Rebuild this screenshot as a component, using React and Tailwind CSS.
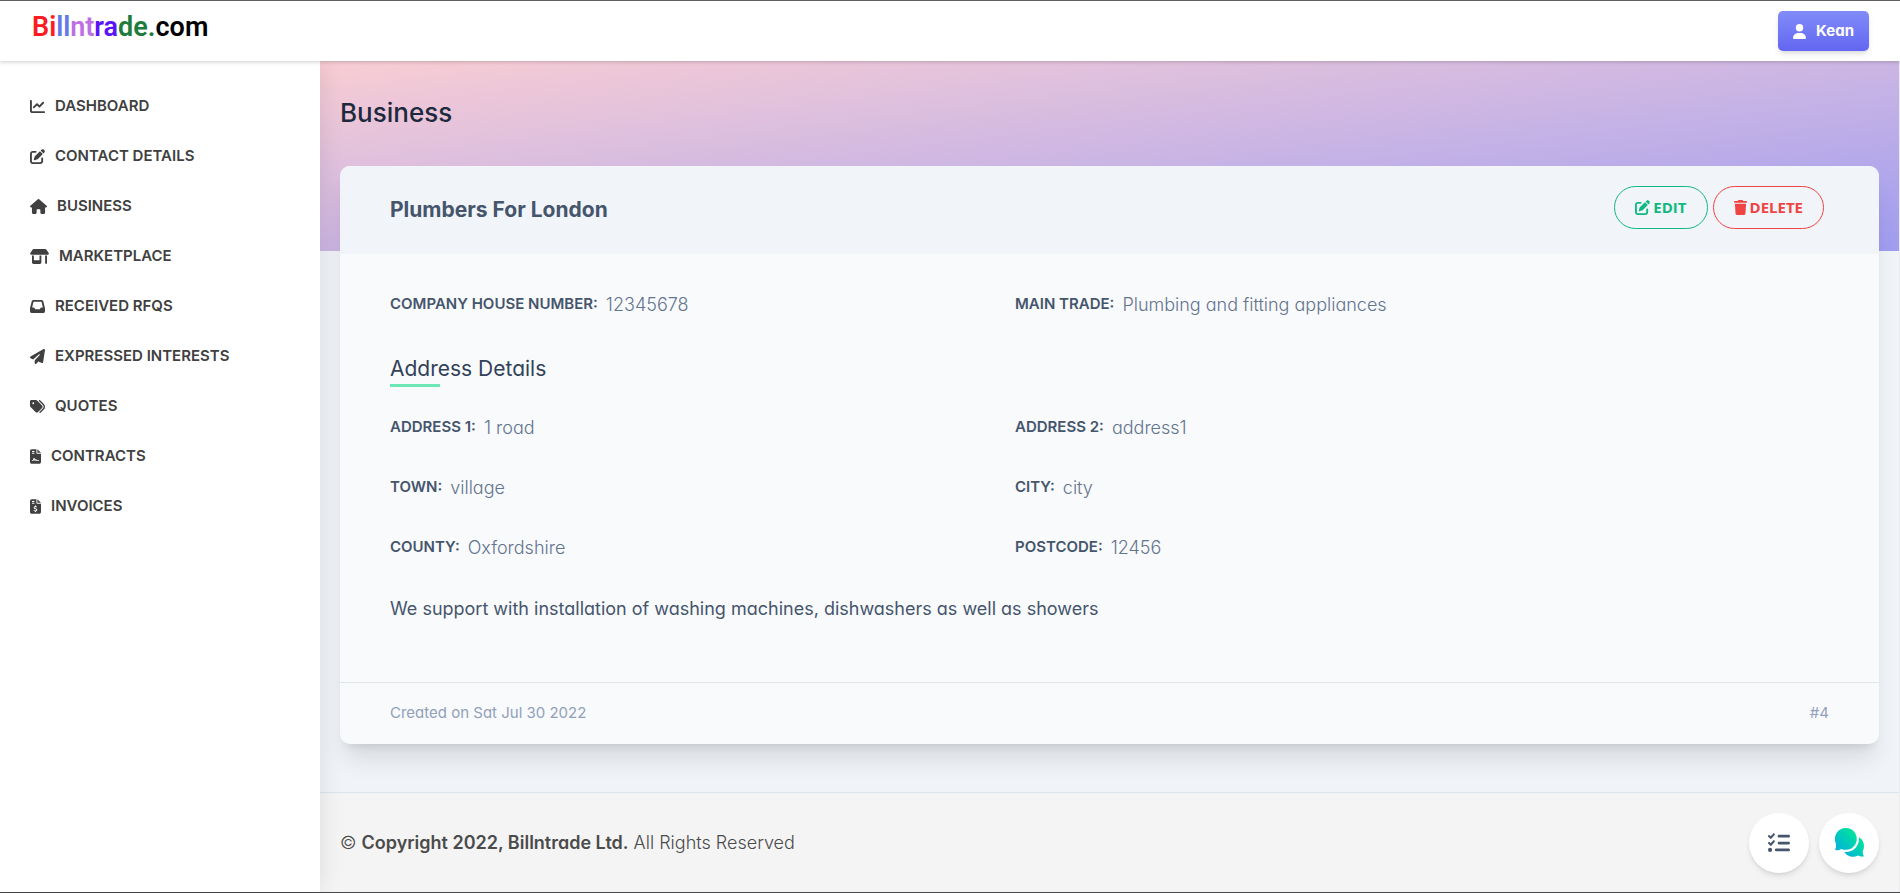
import {
  FaChartLine,
  FaPenToSquare,
  FaHouse,
  FaShop,
  FaInbox,
  FaPaperPlane,
  FaTags,
  FaFileContract,
  FaFileInvoiceDollar,
  FaTrash,
  FaUser,
  FaListCheck,
} from "react-icons/fa6";

const NAV = [
  { label: "Dashboard", Icon: FaChartLine, width: "w-[15px]" },
  { label: "Contact Details", Icon: FaPenToSquare, width: "w-[15px]" },
  { label: "Business", Icon: FaHouse, width: "w-[17px]" },
  { label: "Marketplace", Icon: FaShop, width: "w-[19px]" },
  { label: "Received RFQs", Icon: FaInbox, width: "w-[15px]" },
  { label: "Expressed Interests", Icon: FaPaperPlane, width: "w-[15px]" },
  { label: "Quotes", Icon: FaTags, width: "w-[15px]" },
  { label: "Contracts", Icon: FaFileContract, width: "w-[11px]" },
  { label: "Invoices", Icon: FaFileInvoiceDollar, width: "w-[11px]" },
];

const COMPANY = [
  ["Company House Number", "12345678"],
  ["Main Trade", "Plumbing and fitting appliances"],
];

const ADDRESS = [
  ["Address 1", "1 road"],
  ["Address 2", "address1"],
  ["Town", "village"],
  ["City", "city"],
  ["County", "Oxfordshire"],
  ["Postcode", "12456"],
];

function Logo() {
  return (
    <a
      href="#"
      className="font-[Roboto,sans-serif] text-[27px] leading-8 font-semibold text-black"
    >
      <span className="text-[#fb1b20]">Bi</span>
      <span className="text-[#6478e8]">ll</span>
      <span className="text-[#c06ee4]">nt</span>
      <span className="text-[#5a14f5]">ra</span>
      <span className="text-[#1d7c3b]">de.</span>
      com
    </a>
  );
}

function Header() {
  return (
    <header className="relative z-20 flex h-[61px] items-center justify-between border-t border-[#5f5f62] bg-white pr-[31px] pl-8 shadow-[0_1px_4px_rgba(0,0,0,0.2)]">
      <div className="pb-2">
        <Logo />
      </div>
      <button
        type="button"
        className="flex h-10 items-center gap-2.5 rounded-[5px] bg-gradient-to-b from-[#818cf8] to-[#6366f1] px-[15px] text-[15px] font-bold text-white shadow-md"
      >
        <FaUser className="h-[15px] w-[13px]" />
        Kean
      </button>
    </header>
  );
}

function Sidebar() {
  return (
    <aside className="relative z-10 w-80 shrink-0 bg-white pt-5 shadow-[0_0_24px_rgba(0,0,0,0.1)]">
      <nav>
        <ul>
          {NAV.map(({ label, Icon, width }) => (
            <li key={label}>
              <a
                href="#"
                className="flex h-[50px] items-center gap-2.5 px-[30px] text-[15px] font-semibold text-[#404040] uppercase"
              >
                <Icon className={`h-[15px] ${width}`} />
                {label}
              </a>
            </li>
          ))}
        </ul>
      </nav>
    </aside>
  );
}

function Fields({ items }) {
  return (
    <dl className="grid max-w-[1250px] grid-cols-2">
      {items.map(([label, value]) => (
        <div key={label} className="flex h-[60px] items-center gap-2">
          <dt className="text-[15px] font-semibold text-slate-600 uppercase">{label}:</dt>
          <dd className="text-[18px] font-light text-slate-500">{value}</dd>
        </div>
      ))}
    </dl>
  );
}

function BusinessCard() {
  return (
    <article className="overflow-hidden rounded-[10px] bg-[#f9fafc] shadow-xl">
      <header className="flex h-[88px] items-center justify-between bg-[#f1f4f9] px-[50px]">
        <h2 className="text-[21px] font-bold text-slate-600">Plumbers For London</h2>
        <div className="mr-[5px] mb-[5px] flex gap-[5px] font-['Open_Sans',sans-serif] text-[15px] font-bold">
          <button
            type="button"
            className="flex h-[43px] items-center gap-[3px] rounded-full border border-[#10b981] px-5 text-[#10b981]"
          >
            <FaPenToSquare className="size-[15px]" />
            EDIT
          </button>
          <button
            type="button"
            className="flex h-[43px] items-center gap-[3px] rounded-full border border-[#ef4444] px-5 text-[#ef4444]"
          >
            <FaTrash className="h-[15px] w-[13px]" />
            DELETE
          </button>
        </div>
      </header>
      <div className="px-[50px] pt-5 pb-[61px]">
        <Fields items={COMPANY} />
        <h3 className="mt-5 text-[21px] leading-[30px] text-slate-700">Address Details</h3>
        <div className="mb-[10px] h-[3px] w-[50px] bg-[#6ee7b7]" />
        <Fields items={ADDRESS} />
        <p className="pt-5 text-[18px] leading-[24px] text-slate-600">
          We support with installation of washing machines, dishwashers as well as showers
        </p>
      </div>
      <footer className="flex h-[62px] items-center justify-between border-t border-[#e1e5ea] px-[50px] text-[15px] text-slate-400">
        <span>Created on Sat Jul 30 2022</span>
        <span>#4</span>
      </footer>
    </article>
  );
}

function ChatIcon() {
  return (
    <svg viewBox="0 0 28.4 28.4" className="size-[29px]" aria-hidden="true">
      <defs>
        <linearGradient id="chat-back" x1="0" y1="1" x2="1" y2="0">
          <stop offset="0.1" stopColor="#00b4d8" />
          <stop offset="0.8" stopColor="#00e0a0" />
        </linearGradient>
      </defs>
      <g fill="url(#chat-back)">
        <path d="M10.7 0A10.7 10.7 0 1 1 6.3 20.5C4.4 21.6 2 21.8 .6 21.6C0 21.5 0 21 .3 20.6C1 19.6 1.2 18 .9 15.3A10.7 10.7 0 0 1 10.7 0Z" />
        <path d="M23.4 8.9A10.3 10.3 0 0 1 27.3 22.3C27 24.5 27.3 26 28 27C28.3 27.5 28.1 28 27.6 28C26 28.2 24.2 27.9 22.5 27A10.3 10.3 0 0 1 9 23.4A12.8 12.8 0 0 0 23.4 8.9Z" />
      </g>
    </svg>
  );
}

function Footer() {
  return (
    <footer className="flex h-[100px] items-center justify-between border-t border-[#dbe4ef] bg-[#f4f4f4] px-5 text-[18px] text-[#4b4b4b]">
      <p className="font-light">
        © <strong className="font-semibold">Copyright 2022, Billntrade Ltd.</strong> All Rights
        Reserved
      </p>
      <div className="flex gap-2.5">
        <button
          type="button"
          aria-label="Tasks"
          className="flex size-[60px] items-center justify-center rounded-full bg-white text-slate-600 shadow-md"
        >
          <FaListCheck className="size-[22px]" />
        </button>
        <button
          type="button"
          aria-label="Chat"
          className="flex size-[60px] items-center justify-center rounded-full bg-white shadow-md"
        >
          <ChatIcon />
        </button>
      </div>
    </footer>
  );
}

export default function App() {
  return (
    <div className="flex min-h-screen flex-col border-b border-[#48484a] bg-[#f0f3f8] font-[Inter,sans-serif] [font-feature-settings:'cv11']">
      <Header />
      <div className="flex flex-1">
        <Sidebar />
        <div className="flex min-w-0 flex-1 flex-col border-r border-[#e9ebee]">
          <main className="flex-1 px-5">
            <div className="-mx-5 -mb-[85px] h-[190px] bg-gradient-to-br from-[#f9cdd3] to-[#a09cf0] px-5 pt-8">
              <h1 className="text-[26px] leading-10 font-medium text-slate-800">Business</h1>
            </div>
            <BusinessCard />
          </main>
          <Footer />
        </div>
      </div>
    </div>
  );
}
